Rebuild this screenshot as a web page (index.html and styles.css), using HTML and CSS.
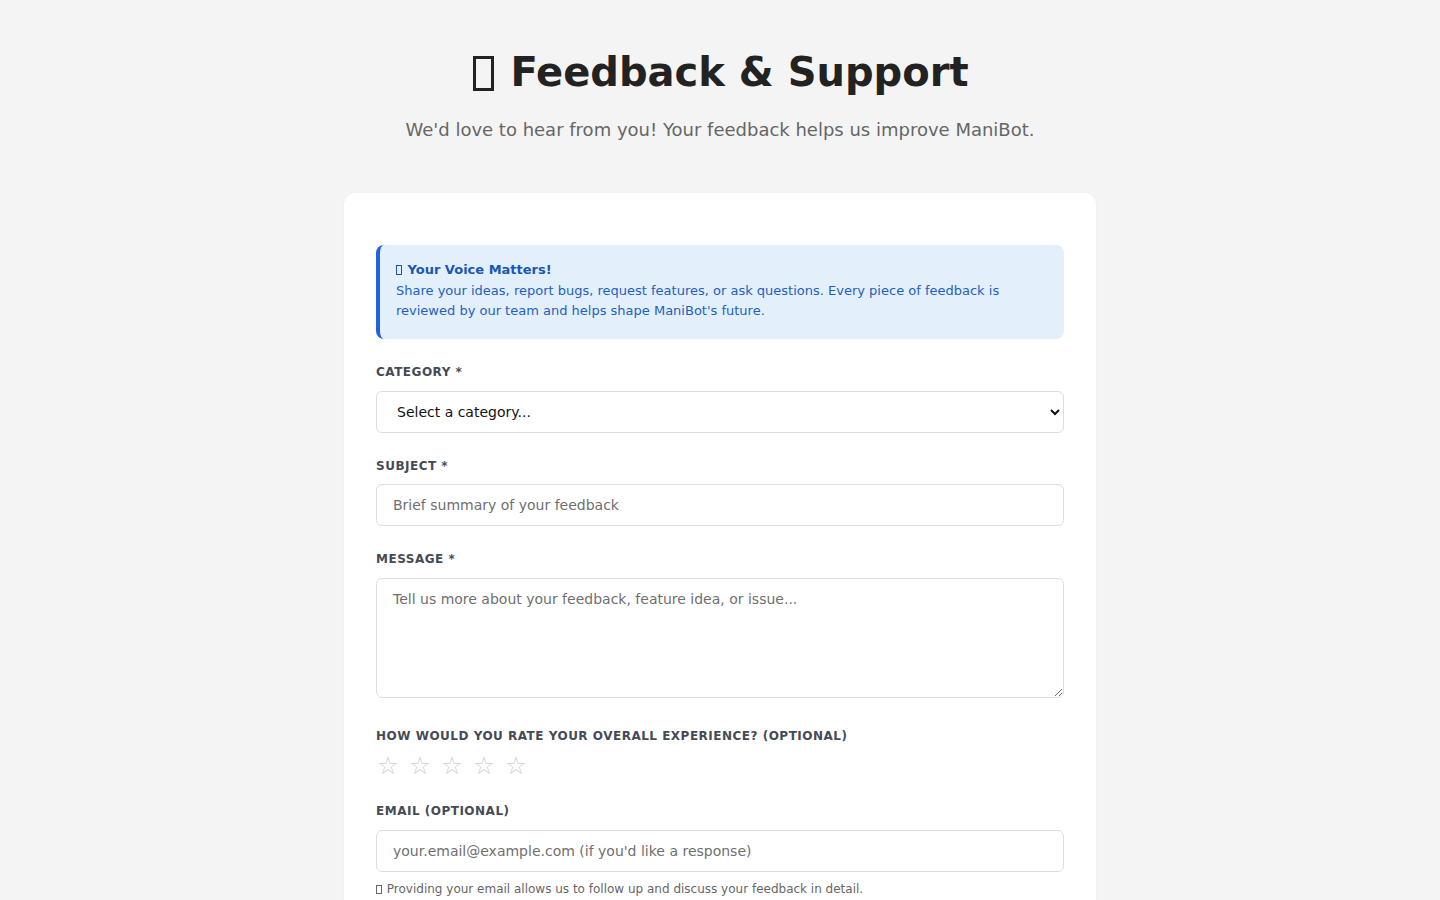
FILE: index.html
```html
<!DOCTYPE html>
<html lang="en">
<head>
<meta charset="utf-8">
<title>Feedback &amp; Support</title>
<link rel="stylesheet" href="styles.css">
</head>
<body>
<div class="page">
  <header class="header">
    <h1 class="title"><span class="tofu tofu-lg"></span> Feedback &amp; Support</h1>
    <p class="subtitle">We'd love to hear from you! Your feedback helps us improve ManiBot.</p>
  </header>
  <main class="card">
    <div class="info">
      <div class="info-title"><span class="tofu tofu-sm"></span> Your Voice Matters!</div>
      <div class="info-text">Share your ideas, report bugs, request features, or ask questions. Every piece of feedback is reviewed by our team and helps shape ManiBot's future.</div>
    </div>
    <form class="form">
      <div class="group">
        <label class="label" for="cat">Category *</label>
        <select id="cat" class="control select">
          <option>Select a category...</option>
        </select>
      </div>
      <div class="group">
        <label class="label" for="subj">Subject *</label>
        <input id="subj" class="control" type="text" placeholder="Brief summary of your feedback">
      </div>
      <div class="group group-textarea">
        <label class="label" for="msg">Message *</label>
        <textarea id="msg" class="control textarea" placeholder="Tell us more about your feedback, feature idea, or issue..."></textarea>
      </div>
      <div class="group group-stars">
        <label class="label">How would you rate your overall experience? (Optional)</label>
        <div class="stars">
          <span class="star">☆</span><span class="star">☆</span><span class="star">☆</span><span class="star">☆</span><span class="star">☆</span>
        </div>
      </div>
      <div class="group">
        <label class="label label-email" for="email">Email (Optional)</label>
        <input id="email" class="control" type="email" placeholder="your.email@example.com (if you'd like a response)">
        <div class="hint"><span class="tofu tofu-xs"></span> Providing your email allows us to follow up and discuss your feedback in detail.</div>
      </div>
    </form>
  </main>
</div>
</body>
</html>
```
FILE: styles.css
```css
* { box-sizing: border-box; }
html, body {
  margin: 0;
  padding: 0;
  background: #f4f4f4;
  font-family: "DejaVu Sans", sans-serif;
  color: #222;
}
.page {
  max-width: 752px;
  margin: 0 auto;
  padding: 49px 0 40px;
}
.header {
  text-align: center;
  margin-bottom: 52px;
}
.title {
  margin: 0 0 23px;
  font-size: 40px;
  line-height: 47px;
  font-weight: bold;
  color: #222;
}
.tofu {
  display: inline-block;
  border-style: solid;
  border-color: currentColor;
}
.tofu-lg {
  width: 21px;
  height: 35px;
  border-width: 3px;
  margin: 0 2px;
  vertical-align: -5px;
}
.tofu-sm {
  width: 6px;
  height: 10px;
  border-width: 1px;
  margin: 0 1px 0 0;
  vertical-align: -1px;
}
.tofu-xs {
  width: 6px;
  height: 9px;
  border-width: 1px;
  margin: 0 1px 0 0;
  vertical-align: -1px;
}
.subtitle {
  margin: 0;
  font-size: 18px;
  line-height: 22px;
  color: #666;
}
.card {
  background: #fff;
  border-radius: 12px;
  padding: 52px 32px 32px;
  box-shadow: 0 1px 3px rgba(0,0,0,0.04);
}
.info {
  background: #e3f0fc;
  border-left: 4px solid #2160e0;
  border-radius: 8px;
  padding: 15px 16px 18px;
  margin-bottom: 26px;
  color: #1d5fc4;
  font-size: 13px;
  line-height: 20px;
}
.info-title { font-weight: bold; color: #1a56b8; margin-bottom: 1px; }
.group { margin-bottom: 26px; }
.group-textarea { margin-bottom: 31px; }
.group-stars { margin-bottom: 24px; }
.label {
  display: block;
  font-size: 12px;
  line-height: 14px;
  font-weight: bold;
  text-transform: uppercase;
  letter-spacing: 0.5px;
  color: #454b56;
  margin-bottom: 11.5px;
}
.label-email { margin-bottom: 12px; }
.control {
  display: block;
  width: 100%;
  height: 42px;
  padding: 0 16px;
  border: 1px solid #ddd;
  border-radius: 6px;
  background: #fff;
  font-family: "DejaVu Sans", sans-serif;
  font-size: 14px;
  color: #222;
}
.control::placeholder { color: #6f6f6f; }
.select { padding: 0 12px 0 16px; color: #111; }
.textarea {
  height: 120px;
  padding: 12px 16px;
  resize: vertical;
  line-height: 17px;
}
.stars {
  display: flex;
  gap: 8px;
  margin-top: -2px;
}
.star {
  font-size: 25px;
  line-height: 28px;
  width: 24px;
  text-align: center;
  color: #d0d0d0;
}
.hint {
  margin-top: 10px;
  font-size: 12px;
  line-height: 14px;
  color: #666;
}
```
